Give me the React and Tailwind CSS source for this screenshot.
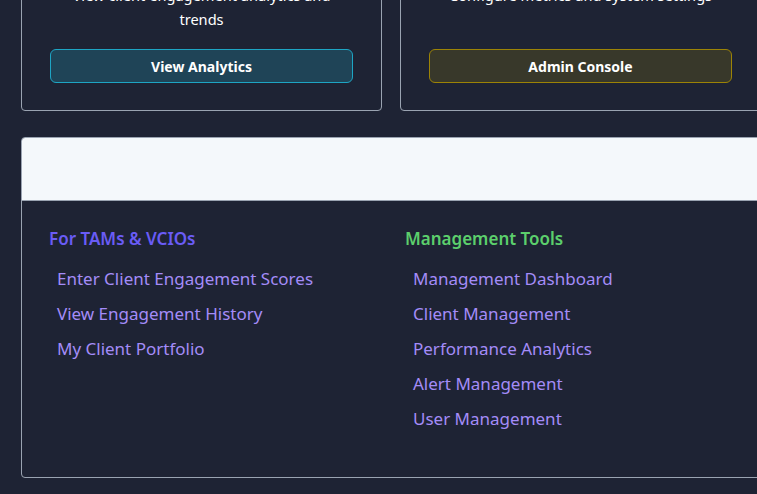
import React from 'react';

const tamLinks = ['Enter Client Engagement Scores', 'View Engagement History', 'My Client Portfolio'];
const mgmtLinks = [
  'Management Dashboard',
  'Client Management',
  'Performance Analytics',
  'Alert Management',
  'User Management',
];

const LinkColumn = ({ title, titleClass, links }) => (
  <div>
    <h3 className={`text-[17px] font-semibold leading-6 mb-[16px] ${titleClass}`}>{title}</h3>
    <ul className="flex flex-col gap-[11px] pl-[8px]">
      {links.map((l) => (
        <li key={l}>
          <a href="#" className="text-[17px] leading-6 text-[#a48cf8] hover:underline">
            {l}
          </a>
        </li>
      ))}
    </ul>
  </div>
);

export default function App() {
  return (
    <div
      className="w-[757px] h-[494px] overflow-hidden bg-[#1e2334] text-white"
      style={{ fontFamily: "'Noto Sans', 'Open Sans', sans-serif" }}
    >
      <div className="w-[740px] ml-[21px] -mt-[22px]">
        {/* Action cards */}
        <div className="grid grid-cols-2 gap-[18px]">
          <div className="border border-[#9aa3b1] rounded-[4px] px-[28px] pb-[27px] pt-[4px] flex flex-col">
            <p className="text-center text-[14.6px] leading-6">
              View client engagement analytics and trends
            </p>
            <button className="mt-[18px] h-[34px] w-full rounded-[6px] border border-[#1ea5c4] bg-[#1f4457] text-[14px] font-bold">
              View Analytics
            </button>
          </div>
          <div className="border border-[#9aa3b1] rounded-[4px] px-[28px] pb-[27px] pt-[4px] flex flex-col justify-between">
            <p className="text-center text-[14.6px] leading-6">Configure metrics and system settings</p>
            <button className="h-[34px] w-full rounded-[6px] border border-[#9c8306] bg-[#38382a] text-[14px] font-bold">
              Admin Console
            </button>
          </div>
        </div>

        {/* Quick links panel */}
        <div className="mt-[26px] border border-[#9aa3b1] rounded-[4px] overflow-hidden">
          <div className="h-[63px] bg-[#f4f8fb] border-b border-[#9aa3b1]" />
          <div className="grid grid-cols-2 gap-[28px] px-[27px] pt-[26px] pb-[46px]">
            <LinkColumn title="For TAMs & VCIOs" titleClass="text-[#6a5cf6]" links={tamLinks} />
            <LinkColumn title="Management Tools" titleClass="text-[#5ccf6c]" links={mgmtLinks} />
          </div>
        </div>
      </div>
    </div>
  );
}
